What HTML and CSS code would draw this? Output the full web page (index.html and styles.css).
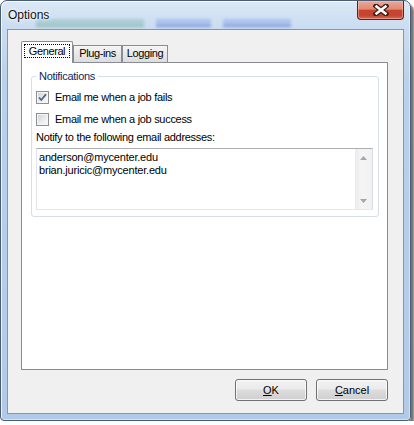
FILE: index.html
```html
<!DOCTYPE html>
<html lang="en">
<head>
<meta charset="utf-8">
<title>Options</title>
<link rel="stylesheet" href="styles.css">
</head>
<body>
<div class="window">
  <div class="titlebar">
    <span class="glass" aria-hidden="true"><span class="smudge g1"></span><span class="smudge g2 w1"></span><span class="smudge g2 w2"></span></span>
    <span class="title">Options</span>
    <button class="close" aria-label="Close">
      <svg width="16" height="12" viewBox="0 0 16 12"><path d="M3 2 L13 10 M13 2 L3 10" stroke="#3d1a14" stroke-width="5" stroke-linecap="square" fill="none"/><path d="M3.5 2.5 L12.5 9.5 M12.5 2.5 L3.5 9.5" stroke="#fff" stroke-width="2.6" stroke-linecap="square" fill="none"/></svg>
    </button>
  </div>
  <div class="client">
    <div class="tabs">
      <div class="tab active"><span class="focus">General</span></div>
      <div class="tab plug">Plug-ins</div>
      <div class="tab log">Logging</div>
    </div>
    <div class="panel">
      <fieldset class="group">
        <legend>Notifications</legend>
        <label class="check"><span class="box"><svg width="11" height="11" viewBox="0 0 11 11"><path d="M2 5.5 L4.3 8 L9 2.3" stroke="#4c6185" stroke-width="1.8" fill="none"/></svg></span>Email me when a job fails</label>
        <label class="check"><span class="box"></span>Email me when a job success</label>
        <div class="caption">Notify to the following email addresses:</div>
        <div class="textbox">
          <div class="lines">
            <div>anderson@mycenter.edu</div>
            <div>brian.juricic@mycenter.edu</div>
          </div>
          <div class="vscroll">
            <span class="arrow"><svg width="7" height="4" viewBox="0 0 7 4"><path d="M0 4 L3.5 0 L7 4 Z" fill="#a6a6a6"/></svg></span>
            <span class="arrow"><svg width="7" height="4" viewBox="0 0 7 4"><path d="M0 0 L3.5 4 L7 0 Z" fill="#a6a6a6"/></svg></span>
          </div>
        </div>
      </fieldset>
    </div>
    <div class="buttons">
      <button class="btn"><u>O</u>K</button>
      <button class="btn"><u>C</u>ancel</button>
    </div>
  </div>
</div>
</body>
</html>
```
FILE: styles.css
```css
* { box-sizing: border-box; }
html, body { margin: 0; background: #fff; }
body {
  font-family: "Liberation Sans", Arial, sans-serif;
  font-size: 11px;
  color: #000;
}

.window {
  width: 411px;
  height: 421px;
  border: 1px solid #4b5b70;
  border-radius: 7px 7px 4px 4px;
  background:
    linear-gradient(to bottom, #dbe8f6 0, #cadcf1 28px, #b9d1eb 80px, #b1cae8 100%);
  box-shadow: 3px 4px 2px rgba(0,0,0,.55), inset 1px 1px 0 rgba(255,255,255,.75), inset -1px -1px 0 rgba(255,255,255,.45);
  display: flex;
  flex-direction: column;
}

.titlebar {
  height: 28px;
  flex: none;
  display: flex;
  align-items: flex-start;
  padding-left: 7px;
  position: relative;
}
.glass {
  position: absolute;
  left: 35px;
  top: 18px;
  display: flex;
  gap: 12px;
  filter: blur(1.6px);
  opacity: .55;
}
.smudge {
  display: block;
  height: 8px;
  border-bottom: 2px solid;
}
.g1 { width: 108px; background: rgba(70,150,120,.45); border-color: rgba(70,150,120,.6); }
.g2 { background: rgba(50,95,210,.4); border-color: rgba(40,85,205,.8); }
.w1 { width: 55px; }
.w2 { width: 68px; }
.title {
  position: relative;
  font-size: 12px;
  line-height: 14px;
  margin-top: 7px;
  color: #111;
  text-shadow: 0 0 6px #fff, 0 0 3px #fff;
}
.close {
  margin-left: auto;
  margin-right: 6px;
  width: 47px;
  height: 19px;
  padding: 0;
  border: 1px solid #5e2118;
  border-top: 0;
  border-radius: 0 0 4px 4px;
  background: linear-gradient(to bottom, #eaa898 0%, #df8a75 45%, #c8432d 52%, #c4452f 80%, #d56c55 100%);
  box-shadow: inset 0 0 0 1px rgba(255,205,195,.45);
  display: flex;
  align-items: center;
  justify-content: center;
  position: relative;
}

.client {
  flex: 1;
  margin: 0 6px 6px;
  border: 1px solid #8597ad;
  background: #f0f0f0;
  padding: 11px 15px 12px 13px;
  display: flex;
  flex-direction: column;
}

.tabs {
  display: flex;
  align-items: flex-end;
  height: 22px;
  margin-bottom: -1px;
  position: relative;
  z-index: 1;
}
.tab {
  height: 17px;
  margin-bottom: 1px;
  border: 1px solid #898c95;
  border-bottom: 0;
  background: linear-gradient(to bottom, #f5f5f5, #e7e7e7 55%, #dcdcdc);
  text-align: center;
  line-height: 15px;
  letter-spacing: -0.4px;
}
.tab.plug { width: 49px; }
.tab.log { width: 46px; }
.tab.active {
  width: 52px;
  height: 22px;
  margin-bottom: 0;
  background: #fff;
  padding: 2px 2px 0;
  border-radius: 2px 2px 0 0;
}
.focus {
  display: block;
  height: 14px;
  border: 1px dotted #000;
  line-height: 12px;
}

.panel {
  height: 308px;
  flex: none;
  border: 1px solid #898c95;
  background: #fff;
  padding: 0 8px 0 9px;
}

.group {
  margin: 7px 0 0;
  border: 1px solid #d5dfe5;
  border-radius: 3px;
  padding: 0 5px 6px 4px;
  min-width: 0;
}
.group legend {
  padding: 0 3px;
  line-height: 12px;
  letter-spacing: -0.3px;
  color: #0f2561;
}

.check {
  display: flex;
  align-items: center;
  gap: 6px;
  height: 16px;
  margin-top: 7px;
  letter-spacing: -0.3px;
}
.check + .check { margin-top: 6px; }
.box {
  width: 13px;
  height: 13px;
  flex: none;
  border: 1px solid #8e8f8f;
  background: linear-gradient(135deg, #cdd1d6 0%, #eceef0 60%, #fafafa 100%);
  box-shadow: inset 0 0 0 1px #f6f6f6;
  display: flex;
  align-items: center;
  justify-content: center;
}

.caption {
  margin-top: 4px;
  line-height: 13px;
  letter-spacing: -0.3px;
}

.textbox {
  margin-top: 4px;
  height: 62px;
  display: flex;
  border: 1px solid;
  border-color: #abadb3 #dbdfe6 #e3e9ef #e2e3ea;
  background: #fff;
}
.lines {
  flex: 1;
  padding: 2px 2px;
  line-height: 13px;
  letter-spacing: -0.2px;
}
.vscroll {
  width: 17px;
  flex: none;
  background: linear-gradient(to right, #ebebeb, #f5f5f5 40%, #f1f1f1);
  display: flex;
  flex-direction: column;
  justify-content: space-between;
}
.arrow {
  height: 17px;
  display: flex;
  align-items: center;
  justify-content: center;
}

.buttons {
  display: flex;
  justify-content: flex-end;
  gap: 9px;
  margin-top: 9px;
}
.btn {
  width: 72px;
  height: 22px;
  padding: 0;
  border: 1px solid #707070;
  border-radius: 3px;
  background: linear-gradient(to bottom, #f2f2f2 0%, #ebebeb 45%, #dddddd 50%, #cfcfcf 100%);
  box-shadow: inset 0 0 0 1px rgba(255,255,255,.75);
  font-family: "Liberation Sans", Arial, sans-serif;
  font-size: 11px;
  color: #000;
}
```
